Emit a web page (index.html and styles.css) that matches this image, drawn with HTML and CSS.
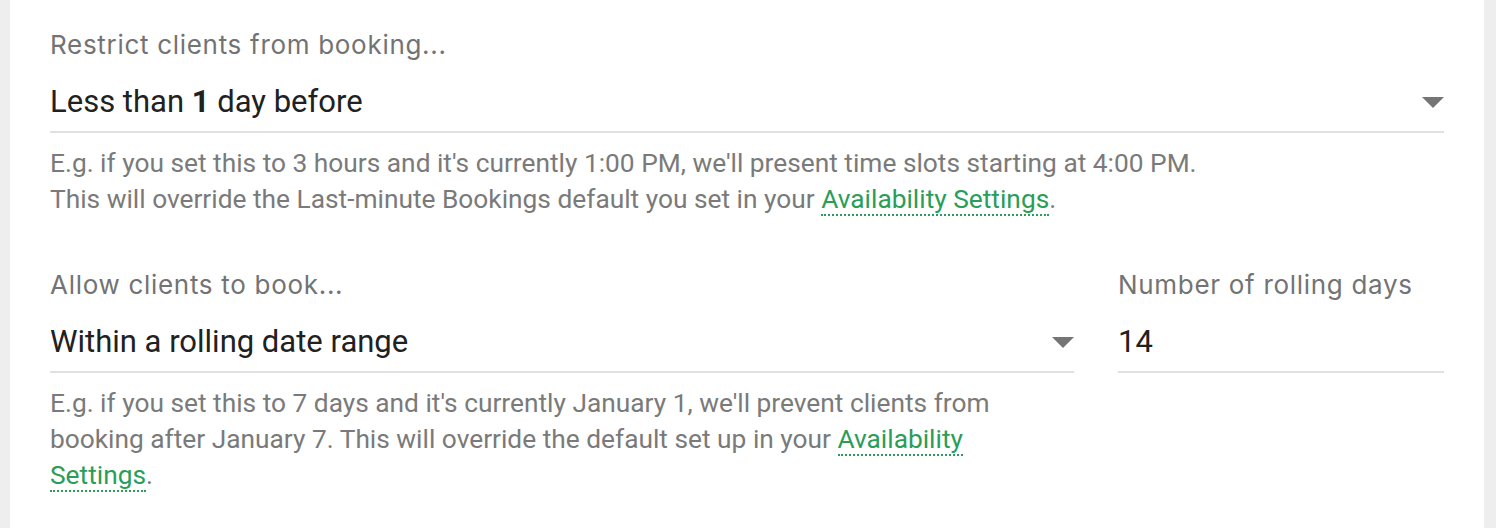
FILE: index.html
```html
<!DOCTYPE html>
<html lang="en">
<head>
  <meta charset="UTF-8">
  <meta name="viewport" content="width=device-width, initial-scale=1.0">
  <title>Booking Restrictions</title>
  <link rel="stylesheet" href="styles.css">
</head>
<body>
  <div class="panel">

    <div class="field">
      <label class="field-label">Restrict clients from booking...</label>
      <div class="select">
        <span class="select-value">Less than <b>1</b> day before</span>
        <span class="caret"></span>
      </div>
      <p class="help">
        E.g. if you set this to 3 hours and it's currently 1:00 PM, we'll present time slots starting at 4:00 PM.<br>
        This will override the Last-minute Bookings default you set in your <a class="link" href="#">Availability Settings</a>.
      </p>
    </div>

    <div class="field-row">
      <div class="field">
        <label class="field-label">Allow clients to book...</label>
        <div class="select">
          <span class="select-value">Within a rolling date range</span>
          <span class="caret"></span>
        </div>
        <p class="help help-narrow">
          E.g. if you set this to 7 days and it's currently January 1, we'll prevent clients from booking after January 7. This will override the default set up in your <a class="link" href="#">Availability Settings</a>.
        </p>
      </div>

      <div class="field">
        <label class="field-label">Number of rolling days</label>
        <div class="select">
          <span class="select-value">14</span>
        </div>
      </div>
    </div>

  </div>
</body>
</html>
```

FILE: styles.css
```css
body {
  margin: 0;
  background: #eeeeee;
  font-family: Roboto, sans-serif;
  height: 528px;
  overflow: hidden;
}
.panel {
  margin: 0 12px 0 10px;
  padding: 30px 40px 0 40px;
  background: #fff;
  height: 100%;
  box-sizing: border-box;
}
.field-label {
  display: block;
  font-family: Inter, sans-serif;
  font-size: 26px;
  letter-spacing: 0.7px;
  line-height: 30px;
  color: #737373;
}
.select {
  display: flex;
  align-items: center;
  justify-content: space-between;
  margin-top: 22px;
  padding: 0 0 9px 0;
  border-bottom: 2px solid #e0e0e0;
}
.select-value {
  font-size: 31px;
  line-height: 40px;
  color: #212121;
}
.select-value b {
  font-weight: 700;
}
.caret {
  width: 0;
  height: 0;
  border-left: 11px solid transparent;
  border-right: 11px solid transparent;
  border-top: 11px solid #757575;
}
.help {
  margin: 12px 0 0 0;
  font-size: 26.3px;
  line-height: 36px;
  color: #7a7a7a;
}
.help-narrow {
  max-width: 960px;
}
.link {
  color: #2a9d58;
  text-decoration: none;
  border-bottom: 2px dotted #2a9d58;
}
.field-row {
  display: grid;
  grid-template-columns: 1fr 326px;
  gap: 44px;
  margin-top: 53px;
}
```
